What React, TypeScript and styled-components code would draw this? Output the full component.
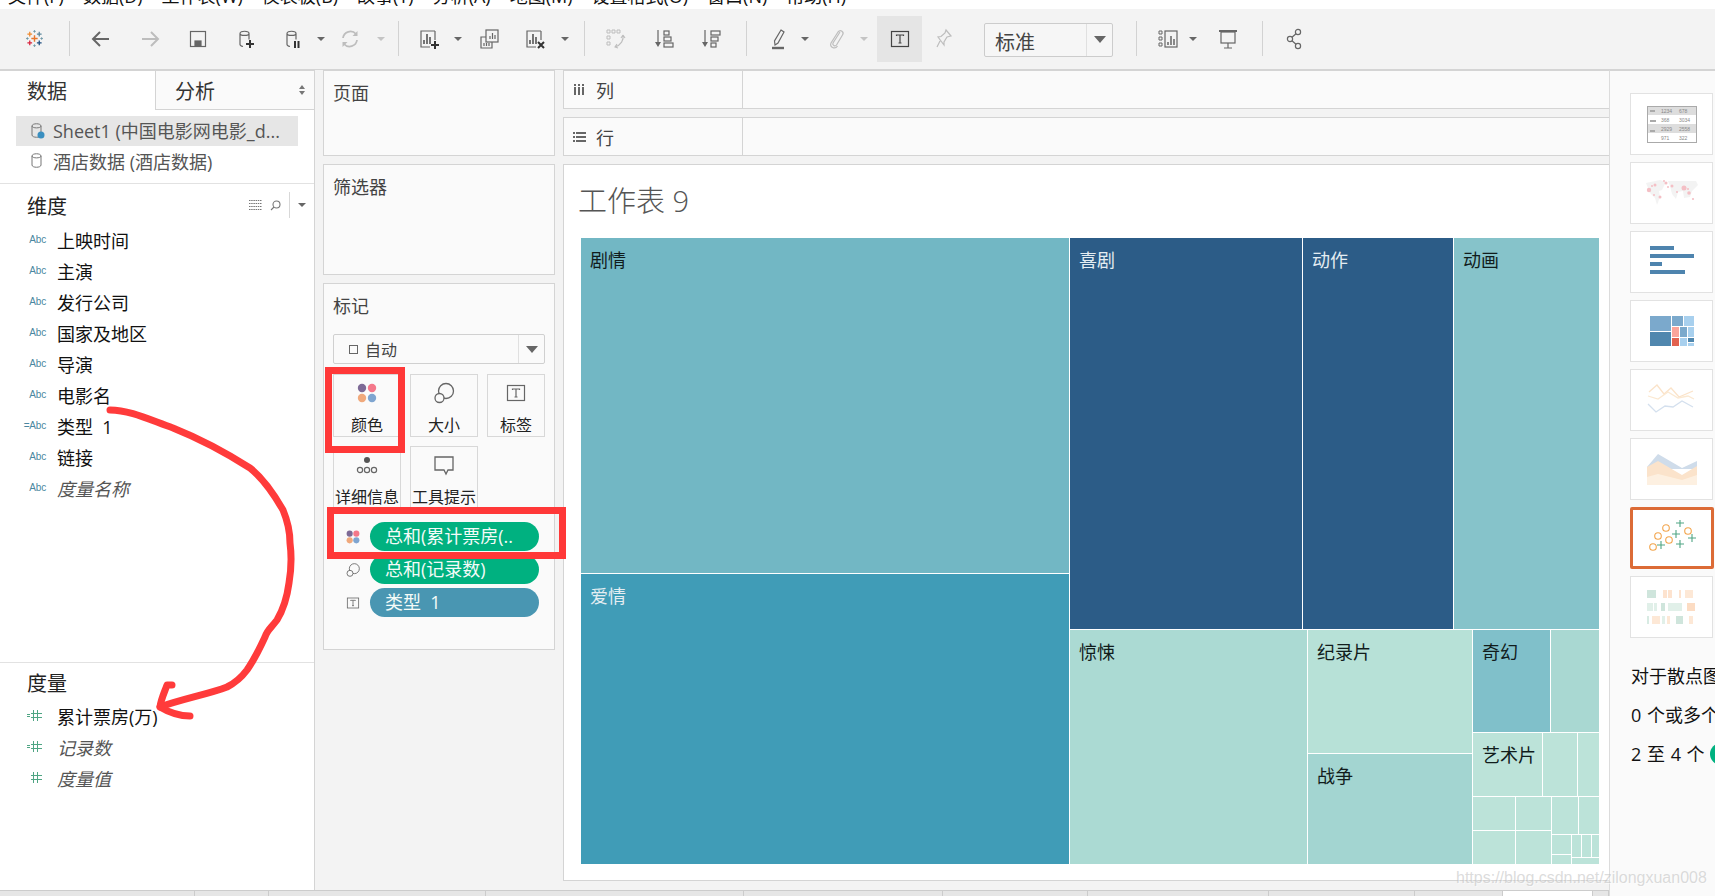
import React from "react";
import styled, { createGlobalStyle } from "styled-components";

const FONT = `"Open Sans", "Noto Sans CJK SC", sans-serif`;

const Global = createGlobalStyle`
  html, body { margin: 0; padding: 0; height: 100%; overflow: hidden; background: #f3f3f3; }
  body { font-family: ${FONT}; color: #222; }
  * { box-sizing: border-box; }
`;

const Page = styled.div`
  position: relative;
  width: 1715px;
  height: 896px;
  overflow: hidden;
  display: flex;
  flex-direction: column;
`;

/* menu: only the bottom of the text is in the picture */
const MenuBar = styled.div`
  flex: 0 0 9px;
  height: 9px;
  background: #fff;
  overflow: hidden;
  display: flex;
  padding-left: 8px;
  gap: 19px;
  font-size: 18px;
  line-height: 18px;
  color: #111;
`;
const MenuItem = styled.span`
  margin-top: -13px;
  white-space: nowrap;
`;

const Toolbar = styled.div`
  flex: 0 0 61px;
  height: 61px;
  background: #f3f3f3;
  display: flex;
  align-items: center;
  border-bottom: 1px solid #d4d4d4;
`;
const Slot = styled.div<{ $ml: number; $off?: boolean }>`
  flex: 0 0 24px;
  height: 24px;
  margin-left: ${(p) => p.$ml}px;
  margin-top: -1px;
  color: ${(p) => (p.$off ? "#bdbdbd" : "#666")};
  display: flex;
  align-items: center;
  justify-content: center;
`;
const Sep = styled.div<{ $ml: number }>`
  flex: 0 0 1px;
  height: 35px;
  margin-left: ${(p) => p.$ml}px;
  margin-top: -1px;
  background: #d2d2d2;
`;
const Caret = styled.div<{ $ml: number; $off?: boolean }>`
  flex: 0 0 8px;
  width: 0;
  height: 0;
  margin-left: ${(p) => p.$ml}px;
  margin-top: -1px;
  border-left: 4px solid transparent;
  border-right: 4px solid transparent;
  border-top: 4px solid ${(p) => (p.$off ? "#c4c4c4" : "#666")};
`;
const ToggleOn = styled.div<{ $ml: number }>`
  flex: 0 0 45px;
  height: 46px;
  margin-left: ${(p) => p.$ml}px;
  margin-top: -1px;
  background: #e5e5e5;
  color: #444;
  display: flex;
  align-items: center;
  justify-content: center;
`;
const FitSelect = styled.div<{ $ml: number }>`
  flex: 0 0 129px;
  height: 34px;
  margin-left: ${(p) => p.$ml}px;
  margin-top: 1px;
  border: 1px solid #ccc;
  border-radius: 2px;
  background: #f6f6f6;
  display: flex;
  align-items: center;
  font-size: 20px;
  color: #444;
`;
const FitValue = styled.span`
  flex: 1;
  padding: 3px 0 0 10px;
`;
const SelectArrow = styled.div<{ $w: number }>`
  flex: 0 0 ${(p) => p.$w}px;
  align-self: stretch;
  border-left: 1px solid #e0e0e0;
  display: flex;
  align-items: center;
  justify-content: center;
  &::after {
    content: "";
    border-left: 6px solid transparent;
    border-right: 6px solid transparent;
    border-top: 7px solid #666;
  }
`;

const Body = styled.div`
  flex: 1;
  display: flex;
  min-height: 0;
`;
const WorkArea = styled.div`
  flex: 0 0 1609px;
  display: flex;
  flex-direction: column;
`;
const Panes = styled.div`
  flex: 0 0 820px;
  display: flex;
`;

/* left data pane */
const DataPane = styled.div`
  flex: 0 0 315px;
  background: #fff;
  border-right: 1px solid #d4d4d4;
  display: flex;
  flex-direction: column;
`;
const TabRow = styled.div`
  flex: 0 0 40px;
  display: flex;
  font-size: 20px;
`;
const PaneTab = styled.div<{ $active?: boolean }>`
  flex: 0 0 ${(p) => (p.$active ? 155 : 159)}px;
  display: flex;
  align-items: center;
  justify-content: space-between;
  padding: 0 9px 0 ${(p) => (p.$active ? 27 : 19)}px;
  background: ${(p) => (p.$active ? "#fff" : "#fafafa")};
  border-top: 1px solid #d4d4d4;
  border-left: ${(p) => (p.$active ? "none" : "1px solid #d4d4d4")};
  border-bottom: ${(p) => (p.$active ? "none" : "1px solid #d4d4d4")};
  color: #333;
`;
const SortMark = styled.span`
  display: flex;
  flex-direction: column;
  gap: 2px;
  &::before,
  &::after {
    content: "";
    border-left: 3px solid transparent;
    border-right: 3px solid transparent;
  }
  &::before { border-bottom: 4px solid #777; }
  &::after { border-top: 4px solid #777; }
`;
const Sources = styled.div`
  flex: 0 0 74px;
  padding: 6px 16px 0;
  border-bottom: 1px solid #e2e2e2;
`;
const SourceRow = styled.div<{ $active?: boolean }>`
  height: 30px;
  display: flex;
  align-items: center;
  padding-left: 14px;
  gap: 7px;
  font-size: 18px;
  color: #555;
  white-space: nowrap;
  background: ${(p) => (p.$active ? "#e6e6e6" : "transparent")};
`;
const SourceName = styled.span<{ $up?: boolean }>`
  margin-top: ${(p) => (p.$up ? -2 : 0)}px;
`;
const FieldSection = styled.div<{ $h: number; $ruled?: boolean }>`
  flex: 0 0 ${(p) => p.$h}px;
  display: flex;
  flex-direction: column;
  border-top: ${(p) => (p.$ruled ? "1px solid #e2e2e2" : "none")};
`;
const SectionHead = styled.div<{ $top: number }>`
  display: flex;
  align-items: center;
  height: 30px;
  margin-top: ${(p) => p.$top}px;
  padding-left: 27px;
  font-size: 20px;
  color: #222;
`;
const SectionTitle = styled.span`
  flex: 1;
`;
const HeadTools = styled.div`
  display: flex;
  align-items: center;
  color: #777;
  padding-right: 8px;
  gap: 8px;
`;
const HeadSep = styled.div`
  width: 1px;
  height: 26px;
  background: #d8d8d8;
`;
const HeadCaret = styled.div`
  border-left: 4px solid transparent;
  border-right: 4px solid transparent;
  border-top: 4px solid #666;
`;
const FieldList = styled.div<{ $top: number }>`
  margin-top: ${(p) => p.$top}px;
  display: flex;
  flex-direction: column;
`;
const FieldRow = styled.div<{ $italic?: boolean }>`
  height: 31px;
  display: flex;
  align-items: center;
  font-size: 18px;
  color: ${(p) => (p.$italic ? "#555" : "#111")};
  font-style: ${(p) => (p.$italic ? "italic" : "normal")};
  white-space: pre;
`;
const TypeTag = styled.span`
  flex: 0 0 57px;
  padding-right: 11px;
  text-align: right;
  font-size: 10px;
  font-style: normal;
  letter-spacing: -0.2px;
  color: #4a87a0;
  font-family: "Liberation Sans", sans-serif;
`;
const MeasureTag = styled.span`
  flex: 0 0 57px;
  padding-right: 15px;
  display: flex;
  justify-content: flex-end;
  color: #4fa584;
`;

/* shelves column */
const CardColumn = styled.div`
  flex: 0 0 232px;
  margin-left: 8px;
  display: flex;
  flex-direction: column;
  gap: 8px;
`;
const Card = styled.div<{ $h: number }>`
  flex: 0 0 ${(p) => p.$h}px;
  background: #fafafa;
  border: 1px solid #d4d4d4;
  padding: 0 9px;
  display: flex;
  flex-direction: column;
`;
const CardTitle = styled.div`
  font-size: 18px;
  color: #444;
  margin-top: 9px;
  height: 26px;
  line-height: 26px;
`;
const MarkSelect = styled.div`
  height: 30px;
  margin-top: 15px;
  background: #fafafa;
  border: 1px solid #d0d0d0;
  border-radius: 2px;
  display: flex;
  align-items: center;
  font-size: 16px;
  color: #444;
`;
const MarkValue = styled.span`
  flex: 1;
  display: flex;
  align-items: center;
  gap: 7px;
  padding-left: 15px;
`;
const Square = styled.span`
  width: 9px;
  height: 9px;
  border: 1px solid #666;
`;
const MarkGrid = styled.div`
  display: grid;
  grid-template-columns: 68px 68px 58px;
  grid-auto-rows: 63px;
  column-gap: 9px;
  row-gap: 9px;
  margin-top: 10px;
`;
const MarkButton = styled.div`
  background: #fafafa;
  border: 1px solid #d8d8d8;
  display: flex;
  flex-direction: column;
  align-items: center;
  color: #666;
  padding-top: 6px;
  white-space: nowrap;
`;
const MarkLabel = styled.span`
  font-size: 16px;
  line-height: 22px;
  color: #222;
  margin-top: 9px;
`;
const PillList = styled.div`
  margin-top: 13px;
  display: flex;
  flex-direction: column;
  gap: 4px;
`;
const PillRow = styled.div`
  display: flex;
  align-items: center;
  height: 29px;
  color: #666;
`;
const PillIcon = styled.div`
  flex: 0 0 37px;
  padding-left: 12px;
  display: flex;
`;
const Pill = styled.div<{ $kind: "measure" | "dim" }>`
  flex: 0 0 169px;
  height: 29px;
  border-radius: 15px;
  padding-left: 15px;
  background: ${(p) => (p.$kind === "measure" ? "#00b180" : "#4996b2")};
  color: #f4fbf8;
  font-size: 18px;
  line-height: 28px;
  white-space: pre;
  overflow: hidden;
`;

/* sheet column */
const SheetColumn = styled.div`
  flex: 0 0 1046px;
  margin-left: 8px;
  display: flex;
  flex-direction: column;
  gap: 8px;
`;
const Shelf = styled.div`
  flex: 0 0 39px;
  background: #fafafa;
  border: 1px solid #d4d4d4;
  border-right: none;
  display: flex;
`;
const ShelfLabel = styled.div`
  flex: 0 0 179px;
  border-right: 1px solid #d4d4d4;
  display: flex;
  align-items: center;
  font-size: 18px;
  color: #444;
  padding: 1px 0 0 9px;
  gap: 9px;
`;
const ShelfIcon = styled.span`
  width: 14px;
  display: flex;
  color: #666;
`;
const SheetCard = styled.div`
  flex: 0 0 717px;
  background: #fff;
  border: 1px solid #d4d4d4;
  border-right: none;
  padding: 0 10px 0 17px;
  display: flex;
  flex-direction: column;
`;
const SheetTitle = styled.div`
  height: 73px;
  padding-top: 13px;
  font-size: 29px;
  line-height: 45px;
  color: #555;
  font-weight: 300;
  margin-left: -3px;
  white-space: pre;
`;

type Tile = {
  size: number;
  dir?: "row" | "col";
  color?: string;
  label?: string;
  light?: boolean;
  kids?: Tile[];
};

const TileBox = styled.div<{ $size: number; $dir: "row" | "col"; $color?: string; $light?: boolean }>`
  flex: 0 0 ${(p) => p.$size}px;
  display: flex;
  flex-direction: ${(p) => (p.$dir === "col" ? "column" : "row")};
  gap: 1px;
  background: ${(p) => p.$color ?? "transparent"};
  color: ${(p) => (p.$light ? "#e4edf2" : "#111c1c")};
  font-size: 18px;
  line-height: 26px;
  padding: ${(p) => (p.$color ? "9px 0 0 9px" : "0")};
  overflow: hidden;
  white-space: nowrap;
`;

const pale = "#bce3d9";
const t = (size: number, color: string, label?: string, light?: boolean): Tile => ({ size, color, label, light });

const treemap: Tile = {
  size: 1018,
  dir: "row",
  kids: [
    {
      size: 488,
      dir: "col",
      kids: [t(335, "#72b7c4", "剧情"), t(290, "#409cb7", "爱情", true)],
    },
    {
      size: 529,
      dir: "col",
      kids: [
        {
          size: 391,
          dir: "row",
          kids: [t(232, "#2c5c87", "喜剧", true), t(150, "#2c5c87", "动作", true), t(145, "#86c3ca", "动画")],
        },
        {
          size: 234,
          dir: "row",
          kids: [
            t(237, "#abdad3", "惊悚"),
            { size: 164, dir: "col", kids: [t(123, "#b7e1d7", "纪录片"), t(110, "#a3d5d1", "战争")] },
            {
              size: 126,
              dir: "col",
              kids: [
                { size: 102, dir: "row", kids: [t(77, "#80c0ca", "奇幻"), t(48, "#a9d8d2")] },
                { size: 63, dir: "row", kids: [t(69, pale, "艺术片"), t(34, pale), t(21, pale)] },
                {
                  size: 67,
                  dir: "row",
                  kids: [
                    {
                      size: 78,
                      dir: "col",
                      kids: [
                        { size: 33, dir: "row", kids: [t(42, pale), t(35, pale)] },
                        { size: 33, dir: "row", kids: [t(42, pale), t(35, pale)] },
                      ],
                    },
                    {
                      size: 47,
                      dir: "col",
                      kids: [
                        { size: 37, dir: "row", kids: [t(26, pale), t(20, pale)] },
                        {
                          size: 29,
                          dir: "row",
                          kids: [
                            { size: 19, dir: "col", kids: [t(19, pale), t(9, pale)] },
                            {
                              size: 27,
                              dir: "col",
                              kids: [
                                { size: 22, dir: "row", kids: [t(9, pale), t(8, pale), t(8, pale)] },
                                t(6, pale),
                              ],
                            },
                          ],
                        },
                      ],
                    },
                  ],
                },
              ],
            },
          ],
        },
      ],
    },
  ],
};

function TreeTile({ tile }: { tile: Tile }) {
  return (
    <TileBox $size={tile.size} $dir={tile.dir ?? "row"} $color={tile.color} $light={tile.light}>
      {tile.label}
      {tile.kids?.map((k, i) => <TreeTile key={i} tile={k} />)}
    </TileBox>
  );
}

const TreemapFrame = styled.div`
  height: 626px;
  display: flex;
`;

const TabStrip = styled.div`
  flex: 0 0 6px;
  background: #e6e6e6;
  border-top: 1px solid #ccc;
  display: flex;
`;
const SheetTab = styled.div<{ $w: number; $active?: boolean }>`
  flex: 0 0 ${(p) => p.$w}px;
  border-right: 1px solid #ccc;
  background: ${(p) => (p.$active ? "#fff" : "#e6e6e6")};
`;

/* show me pane */
const ShowMe = styled.div`
  flex: 0 0 106px;
  background: #fafafa;
  border-left: 1px solid #dcdcdc;
  border-top: 1px solid #d4d4d4;
  padding: 22px 0 0 20px;
  display: flex;
  flex-direction: column;
  overflow: hidden;
`;
const ThumbList = styled.div`
  display: flex;
  flex-direction: column;
  gap: 7px;
`;
const Thumb = styled.div<{ $on?: boolean }>`
  width: ${(p) => (p.$on ? 84 : 83)}px;
  height: 62px;
  background: #fff;
  border: ${(p) => (p.$on ? "3px solid #dc6b36" : "1px solid #e2e2e2")};
  border-radius: ${(p) => (p.$on ? "2px" : "0")};
  display: flex;
  align-items: center;
  justify-content: center;
`;
const HintList = styled.div`
  margin: 25px 0 0 1px;
  display: flex;
  flex-direction: column;
  gap: 13px;
  font-size: 18px;
  line-height: 26px;
  word-spacing: 1px;
  color: #111;
  white-space: pre;
  width: 200px;
`;
const HintRow = styled.div`
  display: flex;
  align-items: center;
  gap: 5px;
`;
const HintPill = styled.span`
  display: inline-block;
  width: 40px;
  height: 22px;
  border-radius: 11px;
  background: #00b180;
`;

/* red marker drawn over the screenshot */
const Scribble = styled.svg`
  position: absolute;
  left: 0;
  top: 0;
  pointer-events: none;
`;
const MarkerBox = styled.div<{ $x: number; $y: number; $w: number; $h: number }>`
  position: absolute;
  left: ${(p) => p.$x}px;
  top: ${(p) => p.$y}px;
  width: ${(p) => p.$w}px;
  height: ${(p) => p.$h}px;
  border: 7px solid #ff3838;
`;
const Watermark = styled.div`
  position: absolute;
  left: 1456px;
  top: 867px;
  font-family: "Liberation Sans", sans-serif;
  font-size: 16px;
  line-height: 22px;
  color: rgba(190, 190, 190, 0.55);
  text-shadow: 1px 1px 0 rgba(255, 255, 255, 0.5);
  white-space: nowrap;
`;

/* icons */
const Svg = ({ children, s = 24, vb = 24 }: { children: React.ReactNode; s?: number; vb?: number }) => (
  <svg width={s} height={s} viewBox={`0 0 ${vb} ${vb}`} fill="none" stroke="currentColor" strokeWidth="1.2">
    {children}
  </svg>
);

const Plus = ({ x, y, r, c, w = 1.6 }: { x: number; y: number; r: number; c: string; w?: number }) => (
  <path d={`M${x - r} ${y}H${x + r}M${x} ${y - r}V${y + r}`} stroke={c} strokeWidth={w} />
);

const LogoIcon = () => (
  <Svg s={19}>
    <Plus x={12} y={12} r={4} c="#e8762b" w={1.8} />
    <Plus x={6} y={6.5} r={3} c="#ef8a2f" />
    <Plus x={18} y={6.5} r={3} c="#5b879b" />
    <Plus x={6} y={17.5} r={3} c="#d9243f" />
    <Plus x={18} y={17.5} r={3} c="#1f4f80" />
    <Plus x={12} y={3} r={1.6} c="#7199a8" w={1.2} />
    <Plus x={3} y={12} r={1.6} c="#7199a8" w={1.2} />
    <Plus x={21} y={12} r={1.6} c="#7199a8" w={1.2} />
    <Plus x={12} y={21} r={1.6} c="#7199a8" w={1.2} />
  </Svg>
);
const BackIcon = () => (
  <Svg><path d="M20 12H5M11 5l-7 7 7 7" strokeWidth="2" /></Svg>
);
const ForwardIcon = () => (
  <Svg><path d="M4 12h15M13 5l7 7-7 7" strokeWidth="2" /></Svg>
);
const SaveIcon = () => (
  <Svg>
    <rect x="4.5" y="4.5" width="15" height="15" />
    <rect x="9" y="14" width="6" height="5" fill="currentColor" />
  </Svg>
);
const Cylinder = () => (
  <path d="M7 6.5c0-3 9-3 9 0M7 6.5c0 2.6 9 2.6 9 0M7 6.5v11c0 1 1 1.6 3 2M16 6.5v6" />
);
const DbAddIcon = () => (
  <Svg>
    <Cylinder />
    <path d="M17 13v8M13 17h8" stroke="#333" strokeWidth="2" />
  </Svg>
);
const DbPauseIcon = () => (
  <Svg>
    <Cylinder />
    <path d="M15 14v7M18.5 14v7" stroke="#333" strokeWidth="2" />
  </Svg>
);
const RefreshIcon = () => (
  <Svg>
    <path d="M5 11a7.5 7.5 0 0 1 13-4M19 13a7.5 7.5 0 0 1-13 4" strokeWidth="1.8" />
    <path d="M19.5 4v5h-5zM4.5 20v-5h5z" fill="currentColor" stroke="none" />
  </Svg>
);
const ChartAddIcon = () => (
  <Svg>
    <path d="M18 4H4v16h9M18 4v9" />
    <path d="M7 17v-4M10 17V7M13 17v-7" strokeWidth="1.8" />
    <path d="M18 14v8M14 18h8" stroke="#333" strokeWidth="2" />
  </Svg>
);
const DuplicateIcon = () => (
  <Svg>
    <rect x="9" y="3" width="12" height="12" />
    <path d="M13 12V9M15.5 12V6M18 12V8" />
    <path d="M9 10H4v11h11v-6M7 19v-3M9.5 19v-3M12 19v-3" />
  </Svg>
);
const ChartDropIcon = () => (
  <Svg>
    <path d="M18 4H4v16h9M18 4v9" />
    <path d="M7 17v-4M10 17V7M13 17v-7" strokeWidth="1.8" />
    <path d="M15 15l6 6M21 15l-6 6" stroke="#333" strokeWidth="2" />
  </Svg>
);
const SwapIcon = () => (
  <Svg>
    <path d="M4 3h3v3H4zM9 3h3v3H9zM14 3h3v3h-3zM4 9h3v3H4zM4 15h3v3H4z" strokeWidth="1" />
    <path d="M20 8c1 5-2 10-8 12M14 17l-2 3 3 1M20 8l-2 3M20 8l2 3" strokeWidth="1.1" />
  </Svg>
);
const SortAscIcon = () => (
  <Svg>
    <path d="M6 3v14" />
    <path d="M3 15h6l-3 5z" fill="currentColor" stroke="none" />
    <rect x="12" y="4" width="5" height="4" />
    <rect x="12" y="10" width="7" height="4" />
    <rect x="12" y="16" width="9" height="4" />
  </Svg>
);
const SortDescIcon = () => (
  <Svg>
    <path d="M6 3v14" />
    <path d="M3 15h6l-3 5z" fill="currentColor" stroke="none" />
    <rect x="12" y="4" width="9" height="4" />
    <rect x="12" y="10" width="7" height="4" />
    <rect x="12" y="16" width="5" height="4" />
  </Svg>
);
const PenIcon = () => (
  <Svg>
    <path d="M14 3l3 2-6 11-3 2-.5-4z" />
    <path d="M5 21h12" strokeWidth="2.4" />
  </Svg>
);
const ClipIcon = () => (
  <Svg>
    <path d="M16 5l-7 11c-1 2 2 4 3.5 2l6-10c2-3-2-6-4.5-3l-7 11c-2 4 4 7 6.5 3" />
  </Svg>
);
const LabelIcon = ({ s = 24 }: { s?: number }) => (
  <Svg s={s}>
    <rect x="3.5" y="4.5" width="17" height="15" />
    <path d="M8.5 9V8h7v1M12 8v8M10.5 16h3" />
  </Svg>
);
const PinIcon = () => (
  <Svg>
    <path d="M14 3l5 6-4 1-3 5 0 3-6-8 3-.5 4-3.500zM8 14l-3 6" />
  </Svg>
);
const VizIcon = () => (
  <Svg>
    <path d="M3 4h3v3H3zM3 10h3v3H3zM3 16h3v3H3z" strokeWidth="1" />
    <rect x="9" y="4" width="12" height="16" />
    <path d="M12 18v-3M15 18V9M18 18v-6" strokeWidth="1.5" />
  </Svg>
);
const PresentIcon = () => (
  <Svg>
    <path d="M3 4h18" strokeWidth="2" />
    <rect x="5" y="5" width="14" height="11" />
    <path d="M12 16v5M8 21h8" />
  </Svg>
);
const ShareIcon = () => (
  <Svg>
    <circle cx="15" cy="5" r="2.6" />
    <circle cx="7" cy="12" r="2.6" />
    <circle cx="15" cy="19" r="2.6" />
    <path d="M9 10.300l4-3.500M9 13.700l4 3.500" />
  </Svg>
);
const SmallDb = ({ badge }: { badge?: boolean }) => (
  <svg width="16" height="18" viewBox="0 0 16 18" fill="none" stroke="#777" strokeWidth="1">
    <path d="M2 4c0-3 9-3 9 0v9c0 3-9 3-9 0zM2 4c0 2.500 9 2.500 9 0" />
    {badge && <circle cx="11" cy="13" r="3.500" fill="#3a8fc0" stroke="none" />}
  </svg>
);
const ListIcon = () => (
  <svg width="13" height="10" viewBox="0 0 13 10" stroke="#777" strokeWidth="1" strokeDasharray="1.500 0.700">
    <path d="M0 .5h13M0 3.500h13M0 6.500h13M0 9.500h13" />
  </svg>
);
const SearchIcon = () => (
  <svg width="11" height="11" viewBox="0 0 11 11" fill="none" stroke="#777" strokeWidth="1.1">
    <circle cx="6.500" cy="4.500" r="3.500" />
    <path d="M4 7l-3 3" />
  </svg>
);
const MeasureIcon = ({ eq }: { eq?: boolean }) => (
  <svg width="15" height="11" viewBox="0 0 15 11" stroke="currentColor" strokeWidth="1" fill="none">
    {eq && <path d="M0 4.500h3M0 6.500h3" />}
    <path d="M6.500 0v11M10.500 0v11M4 3.500h11M4 7.500h11" />
  </svg>
);
const Dots = ({ r = 4.2, s = 24 }: { r?: number; s?: number }) => (
  <svg width={s} height={s} viewBox="0 0 24 24">
    <circle cx="7" cy="7" r={r} fill="#7d6a96" />
    <circle cx="17" cy="7" r={r} fill="#f4788a" />
    <circle cx="7" cy="17" r={r} fill="#f0a97c" />
    <circle cx="17" cy="17" r={r} fill="#7fa5d0" />
  </svg>
);
const SizeIcon = ({ s = 24 }: { s?: number }) => (
  <Svg s={s}>
    <circle cx="14" cy="10" r="7.500" strokeWidth="1.300" />
    <circle cx="7.500" cy="17" r="4.500" fill="#fafafa" strokeWidth="1.300" />
  </Svg>
);
const DetailIcon = () => (
  <Svg>
    <circle cx="12" cy="7" r="3" fill="#555" stroke="none" />
    <circle cx="5" cy="17" r="2.600" />
    <circle cx="12" cy="17" r="2.600" />
    <circle cx="19" cy="17" r="2.600" />
  </Svg>
);
const TooltipIcon = () => (
  <Svg>
    <path d="M3 4h18v13h-5l-2 4-2-4H3z" strokeWidth="1.300" />
  </Svg>
);
const ColsIcon = () => (
  <svg width="12" height="12" viewBox="0 0 12 12" fill="#666">
    <rect x="1" y="3" width="2" height="8" />
    <rect x="5" y="3" width="2" height="8" />
    <rect x="9" y="3" width="2" height="8" />
    <rect x="1" y="0" width="2" height="2" />
    <rect x="5" y="0" width="2" height="2" />
    <rect x="9" y="0" width="2" height="2" />
  </svg>
);
const RowsIcon = () => (
  <svg width="13" height="11" viewBox="0 0 13 11" fill="#666">
    <rect x="0" y="0" width="2" height="2" />
    <rect x="0" y="4" width="2" height="2" />
    <rect x="0" y="8" width="2" height="2" />
    <rect x="3" y="0" width="10" height="2" />
    <rect x="3" y="4" width="10" height="2" />
    <rect x="3" y="8" width="10" height="2" />
  </svg>
);

/* show me thumbnails */
const TableThumb = () => (
  <svg width="50" height="37" viewBox="0 0 50 37" fontSize="5" fontFamily="Liberation Sans" fill="#888">
    <rect x="0" y="0" width="50" height="9" fill="#ddd" />
    <rect x="0" y="18" width="50" height="9" fill="#ddd" />
    <rect x=".5" y=".5" width="49" height="36" fill="none" stroke="#aaa" />
    <rect x="3" y="4" width="5" height="2" fill="#aaa" />
    <rect x="3" y="14" width="6" height="2" fill="#aaa" />
    <rect x="3" y="24" width="5" height="2" fill="#aaa" />
    <text x="14" y="7">1234</text><text x="32" y="7">678</text>
    <text x="14" y="16">368</text><text x="32" y="16">3034</text>
    <text x="14" y="25">2929</text><text x="32" y="25">2558</text>
    <text x="14" y="34">971</text><text x="32" y="34">322</text>
  </svg>
);
const MapThumb = () => (
  <svg width="56" height="30" viewBox="0 0 56 30">
    <path d="M2 5l14-3 6 2-4 8-3 1 1 6-3 8-2-7-5-5zM24 3h28l2 4-6 6-2 6-6 1-1-7-5 1-2 7-4-5-2-8z" fill="#f3f3f3" />
    {[[5,12,2.2],[8,8,1],[11,7,1.5],[10,17,1],[16,19,1.500],[22,5,1.500],[24,9,1],[28,8,1.500],[33,14,1],[40,10,2.500],[44,11,1],[45,15,1.800],[49,21,1.100],[20,3,1]].map(([x,y,r],i) => (
      <circle key={i} cx={x} cy={y} r={r} fill="#f4bfc5" />
    ))}
  </svg>
);
const BarsThumb = () => (
  <svg width="44" height="32" viewBox="0 0 44 32" fill="#4e84ae">
    <rect x="0" y="0" width="24" height="4" />
    <rect x="0" y="8" width="44" height="4" />
    <rect x="0" y="16" width="12" height="4" />
    <rect x="0" y="24" width="35" height="4" />
  </svg>
);
const TreeThumb = () => (
  <svg width="44" height="30" viewBox="0 0 44 30">
    <rect x="0" y="0" width="21" height="15" fill="#7ba9cc" />
    <rect x="0" y="16" width="21" height="14" fill="#5087ae" />
    <rect x="22" y="0" width="11" height="10" fill="#7ba9cc" />
    <rect x="34" y="0" width="10" height="10" fill="#a8d0ee" />
    <rect x="22" y="11" width="7" height="10" fill="#fba49a" />
    <rect x="30" y="11" width="7" height="10" fill="#7ba9cc" />
    <rect x="38" y="11" width="6" height="10" fill="#a8d0ee" />
    <rect x="22" y="22" width="7" height="8" fill="#e2624f" />
    <rect x="30" y="22" width="7" height="8" fill="#a8d0ee" />
    <rect x="38" y="22" width="6" height="4" fill="#5087ae" />
    <rect x="38" y="27" width="6" height="3" fill="#a8d0ee" />
  </svg>
);
const LinesThumb = () => (
  <svg width="50" height="32" viewBox="0 0 50 32" fill="none" strokeWidth="1.300">
    <path d="M2 8l8-7 7 9 7-6 8 9 14-6" stroke="#fbe3c9" />
    <path d="M1 12l10 3 10-7 10 6 10-2 6 3" stroke="#fbe9d2" />
    <path d="M1 20l8 8 9-6 8 1 9-6 11 6" stroke="#d4e0ee" />
  </svg>
);
const AreaThumb = () => (
  <svg width="50" height="32" viewBox="0 0 50 32">
    <path d="M0 14l11-13 24 14 15-7v8H0z" fill="#cfdcea" />
    <path d="M0 14l11-6 24 14 15-9v8 11H0z" fill="#fbe3cb" />
    <path d="M0 24l11-3 24 6 15-5v10H0z" fill="#fdf0e1" />
  </svg>
);
const ScatterThumb = () => (
  <svg width="50" height="36" viewBox="0 0 50 36" fill="none" strokeWidth="1.100">
    {[[19,8],[11,16],[22,20],[6,27],[41,11]].map(([x,y],i) => (
      <circle key={i} cx={x} cy={y} r="3.300" stroke="#f2a54d" />
    ))}
    {[[33,3],[29,14],[45,18],[14,25],[33,24]].map(([x,y],i) => (
      <path key={i} d={`M${x-4} ${y}h8M${x} ${y-4}v8`} stroke="#4fa584" />
    ))}
  </svg>
);
const HeatThumb = () => (
  <svg width="50" height="34" viewBox="0 0 50 34">
    {[
      [0,0,9,8,"#cfe5dc"],[16,0,4,8,"#fde3cf"],[21,0,4,8,"#fde3cf"],[32,0,2,8,"#fde3cf"],[38,0,8,8,"#fde8d6"],
      [0,13,6,8,"#e1f0e9"],[7,13,3,8,"#e1f0e9"],[14,13,4,8,"#cfe5dc"],[21,13,14,8,"#e1f0e9"],[40,13,8,8,"#fcdcc3"],
      [0,26,2,8,"#d8ebe3"],[5,26,8,8,"#fde8d6"],[15,26,3,8,"#e1f0e9"],[20,26,3,8,"#fde8d6"],[29,26,7,8,"#cfe5dc"],[42,26,4,8,"#fde8d6"],
    ].map(([x,y,w,h,c],i) => (
      <rect key={i} x={x as number} y={y as number} width={w as number} height={h as number} fill={c as string} />
    ))}
  </svg>
);

const menus = ["文件(F)", "数据(D)", "工作表(W)", "仪表板(B)", "故事(T)", "分析(A)", "地图(M)", "设置格式(O)", "窗口(N)", "帮助(H)"];
const dims: { name: string; tag?: string; italic?: boolean }[] = [
  { name: "上映时间" },
  { name: "主演" },
  { name: "发行公司" },
  { name: "国家及地区" },
  { name: "导演" },
  { name: "电影名" },
  { name: "类型  1", tag: "=Abc" },
  { name: "链接" },
  { name: "度量名称", italic: true },
];
const sheetTabs = [195, 74, 217, 258, 199, 145, 181, 146, 88, 90, 16];

export default function App() {
  return (
    <Page>
      <Global />
      <MenuBar>
        {menus.map((m) => <MenuItem key={m}>{m}</MenuItem>)}
      </MenuBar>
      <Toolbar>
        <Slot $ml={22}><LogoIcon /></Slot>
        <Sep $ml={23} />
        <Slot $ml={19}><BackIcon /></Slot>
        <Slot $ml={25} $off><ForwardIcon /></Slot>
        <Slot $ml={24}><SaveIcon /></Slot>
        <Slot $ml={23}><DbAddIcon /></Slot>
        <Slot $ml={23}><DbPauseIcon /></Slot>
        <Caret $ml={13} />
        <Slot $ml={13} $off><RefreshIcon /></Slot>
        <Caret $ml={15} $off />
        <Sep $ml={13} />
        <Slot $ml={18}><ChartAddIcon /></Slot>
        <Caret $ml={13} />
        <Slot $ml={15}><DuplicateIcon /></Slot>
        <Slot $ml={22}><ChartDropIcon /></Slot>
        <Caret $ml={14} />
        <Sep $ml={15} />
        <Slot $ml={18} $off><SwapIcon /></Slot>
        <Slot $ml={25}><SortAscIcon /></Slot>
        <Slot $ml={23}><SortDescIcon /></Slot>
        <Sep $ml={23} />
        <Slot $ml={20}><PenIcon /></Slot>
        <Caret $ml={10} />
        <Slot $ml={15} $off><ClipIcon /></Slot>
        <Caret $ml={12} $off />
        <ToggleOn $ml={9}><LabelIcon /></ToggleOn>
        <Slot $ml={10} $off><PinIcon /></Slot>
        <FitSelect $ml={28}>
          <FitValue>标准</FitValue>
          <SelectArrow $w={26} />
        </FitSelect>
        <Sep $ml={23} />
        <Slot $ml={19}><VizIcon /></Slot>
        <Caret $ml={9} />
        <Slot $ml={19}><PresentIcon /></Slot>
        <Sep $ml={22} />
        <Slot $ml={20}><ShareIcon /></Slot>
      </Toolbar>
      <Body>
        <WorkArea>
          <Panes>
            <DataPane>
              <TabRow>
                <PaneTab $active>数据</PaneTab>
                <PaneTab>分析<SortMark /></PaneTab>
              </TabRow>
              <Sources>
                <SourceRow $active><SmallDb badge /><SourceName $up>Sheet1 (中国电影网电影_d...</SourceName></SourceRow>
                <SourceRow><SmallDb /><SourceName>酒店数据 (酒店数据)</SourceName></SourceRow>
              </Sources>
              <FieldSection $h={478}>
                <SectionHead $top={6}>
                  <SectionTitle>维度</SectionTitle>
                  <HeadTools>
                    <ListIcon />
                    <SearchIcon />
                    <HeadSep />
                    <HeadCaret />
                  </HeadTools>
                </SectionHead>
                <FieldList $top={4}>
                  {dims.map((d) => (
                    <FieldRow key={d.name} $italic={d.italic}>
                      <TypeTag>{d.tag ?? "Abc"}</TypeTag>
                      {d.name}
                    </FieldRow>
                  ))}
                </FieldList>
              </FieldSection>
              <FieldSection $h={227} $ruled>
                <SectionHead $top={4}>
                  <SectionTitle>度量</SectionTitle>
                </SectionHead>
                <FieldList $top={3}>
                  <FieldRow><MeasureTag><MeasureIcon eq /></MeasureTag>累计票房(万)</FieldRow>
                  <FieldRow $italic><MeasureTag><MeasureIcon eq /></MeasureTag>记录数</FieldRow>
                  <FieldRow $italic><MeasureTag><MeasureIcon /></MeasureTag>度量值</FieldRow>
                </FieldList>
              </FieldSection>
            </DataPane>
            <CardColumn>
              <Card $h={86}><CardTitle>页面</CardTitle></Card>
              <Card $h={111}><CardTitle>筛选器</CardTitle></Card>
              <Card $h={367}>
                <CardTitle>标记</CardTitle>
                <MarkSelect>
                  <MarkValue><Square />自动</MarkValue>
                  <SelectArrow $w={26} />
                </MarkSelect>
                <MarkGrid>
                  <MarkButton><Dots /><MarkLabel>颜色</MarkLabel></MarkButton>
                  <MarkButton><SizeIcon /><MarkLabel>大小</MarkLabel></MarkButton>
                  <MarkButton><LabelIcon /><MarkLabel>标签</MarkLabel></MarkButton>
                  <MarkButton><DetailIcon /><MarkLabel>详细信息</MarkLabel></MarkButton>
                  <MarkButton><TooltipIcon /><MarkLabel>工具提示</MarkLabel></MarkButton>
                </MarkGrid>
                <PillList>
                  <PillRow><PillIcon><Dots s={16} r={4.6} /></PillIcon><Pill $kind="measure">总和(累计票房(..</Pill></PillRow>
                  <PillRow><PillIcon><SizeIcon s={16} /></PillIcon><Pill $kind="measure">总和(记录数)</Pill></PillRow>
                  <PillRow><PillIcon><LabelIcon s={16} /></PillIcon><Pill $kind="dim">类型  1</Pill></PillRow>
                </PillList>
              </Card>
            </CardColumn>
            <SheetColumn>
              <Shelf><ShelfLabel><ShelfIcon><ColsIcon /></ShelfIcon>列</ShelfLabel></Shelf>
              <Shelf><ShelfLabel><ShelfIcon><RowsIcon /></ShelfIcon>行</ShelfLabel></Shelf>
              <SheetCard>
                <SheetTitle>工作表 9</SheetTitle>
                <TreemapFrame>
                  <TreeTile tile={treemap} />
                </TreemapFrame>
              </SheetCard>
            </SheetColumn>
          </Panes>
          <TabStrip>
            {sheetTabs.map((w, i) => <SheetTab key={i} $w={w} $active={i === 9} />)}
          </TabStrip>
        </WorkArea>
        <ShowMe>
          <ThumbList>
            <Thumb><TableThumb /></Thumb>
            <Thumb><MapThumb /></Thumb>
            <Thumb><BarsThumb /></Thumb>
            <Thumb><TreeThumb /></Thumb>
            <Thumb><LinesThumb /></Thumb>
            <Thumb><AreaThumb /></Thumb>
            <Thumb $on><ScatterThumb /></Thumb>
            <Thumb><HeatThumb /></Thumb>
          </ThumbList>
          <HintList>
            <HintRow>对于散点图</HintRow>
            <HintRow>0 个或多个维度</HintRow>
            <HintRow>2 至 4 个<HintPill /></HintRow>
          </HintList>
        </ShowMe>
      </Body>
      <MarkerBox $x={325} $y={367} $w={80} $h={86} />
      <MarkerBox $x={327} $y={507} $w={239} $h={52} />
      <Scribble width="1715" height="896" fill="none" stroke="#ff3b3b" strokeWidth="7" strokeLinecap="round" strokeLinejoin="round">
        <path d="M110 410c20 0 40 10 63 18c30 12 55 26 77 40c15 12 25 28 33 42c5 12 7 22 7 33c2 15 1 28 -1 40c-2 15 -6 27 -12 37c-6 8 -10 10 -12 17c-6 13 -11 23 -18 33c-6 8 -12 13 -20 17c-18 7 -45 12 -67 20" />
        <path d="M172 685h-5c-2 6 -6 14 -7 22c10 6 18 9 30 9" />
      </Scribble>
      <Watermark>https://blog.csdn.net/zilongxuan008</Watermark>
    </Page>
  );
}
